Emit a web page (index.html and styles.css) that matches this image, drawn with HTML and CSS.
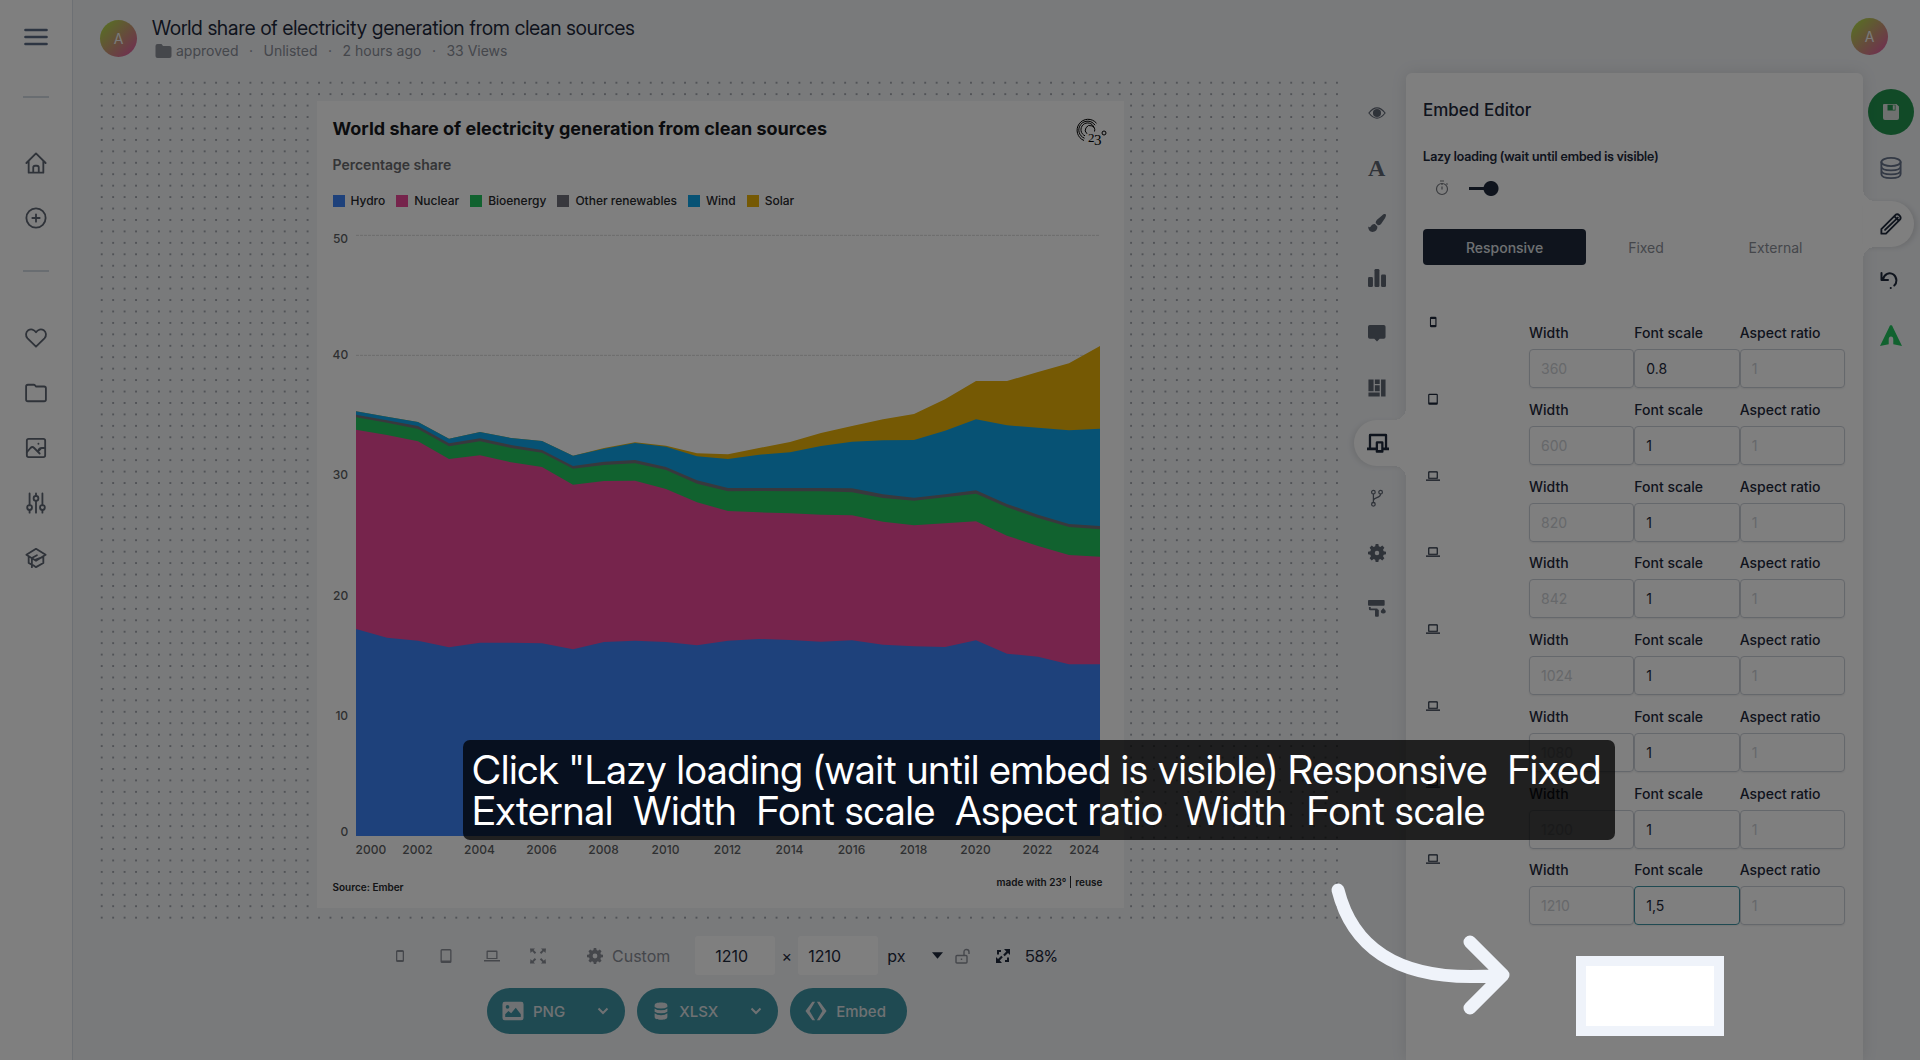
FILE: index.html
```html
<!DOCTYPE html>
<html lang="en">
<head>
<meta charset="utf-8">
<title>Embed Editor</title>
<meta name="viewport" content="width=device-width, initial-scale=1">
<link rel="stylesheet" href="styles.css">
</head>
<body>
<div class="app">
  <nav class="sidebar" aria-label="Main">
    <button class="nav-btn menu-btn" aria-label="Menu"><svg viewBox="0 0 24 24" class="i28 line bold"><path d="M3 6h18M3 12h18M3 18h18"/></svg></button>
    <hr class="nav-rule">
    <div class="nav-group">
      <a href="#" aria-label="Home"><svg viewBox="0 0 24 24" class="i24 line"><path d="M1.500 12 12 1.500 22.500 12M4 10v12.500h16V10M9 22.500V17q0-2 2-2h2q2 0 2 2v5.500"/></svg></a>
      <a href="#" aria-label="Create"><svg viewBox="0 0 24 24" class="i24 line"><circle cx="12" cy="12" r="10.500"/><path d="M12 8v8M8 12h8"/></svg></a>
    </div>
    <hr class="nav-rule">
    <div class="nav-group">
      <a href="#" aria-label="Favourites"><svg viewBox="0 0 24 24" class="i24 line"><path d="M12 21.500 2.800 12.300C.2 9.500.8 5.500 3.500 3.600 6.300 1.700 10 2.500 12 5.800c2-3.300 5.700-4.100 8.500-2.200 2.700 1.900 3.300 5.900.7 8.700z"/></svg></a>
      <a href="#" aria-label="Folders"><svg viewBox="0 0 24 24" class="i24 line"><path d="M1.200 19V5q0-2 2-2h6.300q1 0 1.600.8l.8 1.100h8.900q2 0 2 2V19q0 2-2 2H3.200q-2 0-2-2z"/></svg></a>
      <a href="#" aria-label="Images"><svg viewBox="0 0 24 24" class="i24 line"><rect x="2" y="2" width="20" height="20" rx="2"/><path d="m2 16.500 4-4.500q2-2 4 0l6 6M14.500 15.500q.5-3.500 4-3.500h3.500M14.500 15.500l2.500-2.500M14.600 7.400h.1"/></svg></a>
      <a href="#" aria-label="Settings"><svg viewBox="0 0 24 24" class="i24 line"><path d="M5 1.500v13M5 20v2.500M12 1.500V4M12 9.500v13M19 1.500v13M19 20v2.500"/><circle cx="5" cy="17" r="2.600"/><circle cx="12" cy="7" r="2.600"/><circle cx="19" cy="17" r="2.600"/></svg></a>
      <a href="#" aria-label="Academy"><svg viewBox="0 0 24 24" class="i24 line"><path d="M1.500 8.500 12 2l10.500 6.500L12 15zM4 10.500v7l3 1.500M20 10.500v7L12 22l-3-2M7.500 22V12L13 9M11 14l8-3"/></svg></a>
    </div>
  </nav>

  <div class="workspace">
    <header class="topbar">
      <span class="avatar">A</span>
      <div class="doc">
        <h1 class="doc-title">World share of electricity generation from clean sources</h1>
        <p class="doc-meta">
          <svg viewBox="0 0 16 14" class="folder"><path d="M0 2q0-2 2-2h4l1.500 2H14q2 0 2 2v8q0 2-2 2H2q-2 0-2-2z"/></svg>
          <span>approved</span><i>·</i><span>Unlisted</span><i>·</i><span>2 hours ago</span><i>·</i><span>33 Views</span>
        </p>
      </div>
      <span class="avatar avatar-end">A</span>
    </header>

    <div class="editor">
      <main class="stage">
        <div class="canvas">
          <article class="chart-card">
            <svg class="brand" viewBox="0 0 30 28"><g fill="none" stroke="#000"><path d="M19.500 4.200A11 11 0 1 0 7 21.500"/><path d="M18 6.200A8.800 8.800 0 1 0 7.500 19.200"/><path d="M17 8.500A6.700 6.700 0 1 0 8 16.800"/><path d="M17.500 12.500A4.700 4.700 0 1 0 10 14.800"/><circle cx="27" cy="14" r="2"/></g><text x="11" y="23" font-size="13">2</text><text x="17" y="26" font-size="15">3</text></svg>
            <h2 class="chart-title">World share of electricity generation from clean sources</h2>
            <p class="chart-sub">Percentage share</p>
            <ul class="legend">
              <li><span class="swatch hydro"></span>Hydro</li>
              <li><span class="swatch nuclear"></span>Nuclear</li>
              <li><span class="swatch bio"></span>Bioenergy</li>
              <li><span class="swatch other"></span>Other renewables</li>
              <li><span class="swatch wind"></span>Wind</li>
              <li><span class="swatch solar"></span>Solar</li>
            </ul>
            <div class="plot-area">
              <div class="y-axis"><span>50</span><span>40</span><span>30</span><span>20</span><span>10</span><span>0</span></div>
              <svg class="plot" viewBox="0 103 24 1803" preserveAspectRatio="none" role="img" aria-label="Stacked area chart, 2000 to 2024">
                <g class="gridlines"><path d="M0 104H24M0 464H24"/></g>
                <polygon class="solar" points="0,632 1,648 2,664 3,714 4,694 5,712 6,721 7,765 8,742 9,725 10,735 11,758 12,761 13,742 14,724 15,697 16,676 17,656 18,640 19,596 20,541 21,541 22,514 23,488 24,436 24,1906 0,1906"/>
                <polygon class="wind" points="0,632 1,648 2,664 3,714 4,694 5,712 6,721 7,765 8,744 9,727 10,738 11,767 12,775 13,762 14,755 15,736 16,723 17,719 18,718 19,690 20,656 21,674 22,681 23,689 24,684 24,1906 0,1906"/>
                <polygon class="other" points="0,642 1,659 2,676 3,728 4,713 5,733 6,748 7,796 8,783 9,778 10,799 11,839 12,862 13,862 14,862 15,862 16,863 17,881 18,891 19,881 20,869 21,910 22,942 23,970 24,976 24,1906 0,1906"/>
                <polygon class="bio" points="0,650 1,666 2,685 3,737 4,722 5,742 6,756 7,804 8,793 9,788 10,808 11,849 12,872 13,871 14,872 15,872 16,875 17,892 18,900 19,890 20,879 21,920 22,952 23,979 24,986 24,1906 0,1906"/>
                <polygon class="nuclear" points="0,687 1,703 2,722 3,775 4,764 5,785 6,799 7,852 8,841 9,840 10,865 11,905 12,931 13,935 14,938 15,942 16,944 17,963 18,974 19,968 20,962 21,1005 22,1036 23,1063 24,1068 24,1906 0,1906"/>
                <polygon class="hydro" points="0,1285 1,1311 2,1320 3,1340 4,1326 5,1326 6,1328 7,1346 8,1324 9,1320 10,1324 11,1334 12,1320 13,1315 14,1318 15,1323 16,1319 17,1332 18,1337 19,1339 20,1319 21,1359 22,1368 23,1391 24,1391 24,1906 0,1906"/>
              </svg>
              <div class="x-axis"><span>2000</span><span>2002</span><span>2004</span><span>2006</span><span>2008</span><span>2010</span><span>2012</span><span>2014</span><span>2016</span><span>2018</span><span>2020</span><span>2022</span><span>2024</span></div>
            </div>
            <footer class="chart-foot"><span>Source: Ember</span><span class="credit"><a href="#">made with 23°</a><a href="#" class="reuse">reuse</a></span></footer>
          </article>
        </div>

        <div class="sizebar">
          <div class="devices">
            <button aria-label="Phone"><svg viewBox="0 0 16 16" class="i16"><path fill-rule="evenodd" d="M5.500 2h5q1.500 0 1.500 1.500v9q0 1.500-1.500 1.500h-5Q4 14 4 12.500v-9Q4 2 5.500 2zM5.300 4v8h5.400V4z"/></svg></button>
            <button aria-label="Tablet"><svg viewBox="0 0 16 16" class="i16"><path fill-rule="evenodd" d="M4 1h8q1.500 0 1.500 1.500v11Q13.500 15 12 15H4q-1.500 0-1.500-1.500v-11Q2.500 1 4 1zM3.800 2.500v10h8.400v-10z"/></svg></button>
            <button aria-label="Laptop"><svg viewBox="0 0 16 16" class="i16"><path fill-rule="evenodd" d="M3.500 2.500h9q1 0 1 1V11h-11V3.500q0-1 1-1zM3.800 4v6h8.400V4zM0 12h16v1.500H0z"/></svg></button>
            <button aria-label="Full screen"><svg viewBox="0 0 16 16" class="i16"><path d="M0 .5h5L3.600 1.900l2.600 2.700-1.400 1.300-2.600-2.600L.5 5zM16 .5h-5l1.400 1.400-2.600 2.700 1.400 1.300 2.600-2.600L15.500 5zM0 15.500h5l-1.400-1.400 2.600-2.700-1.400-1.300-2.600 2.600L.5 11zM16 15.500h-5l1.400-1.400-2.600-2.700 1.400-1.300 2.600 2.600L15.500 11z"/></svg></button>
          </div>
          <button class="custom"><svg viewBox="0 0 20 20" class="i16"><path fill-rule="evenodd" d="M8.500 0h3l.5 2.600 1.700.7L15.900 1.800l2.300 2.300-1.500 2.200.7 1.700 2.600.5v3l-2.600.5-.7 1.700 1.500 2.200-2.300 2.300-2.200-1.500-1.700.7-.5 2.600h-3L8 17.400l-1.700-.7-2.200 1.500-2.300-2.300 1.500-2.200L2.600 12 0 11.500v-3L2.600 8l.7-1.700-1.500-2.200 2.300-2.300 2.200 1.500L8 2.600zM10 7a3 3 0 1 0 0 6 3 3 0 0 0 0-6z"/></svg>Custom</button>
          <input class="dim dim-w" aria-label="Width in pixels" value="1210"><span class="times">×</span><input class="dim" aria-label="Height in pixels" value="1210">
          <button class="unit">px<svg viewBox="0 0 12 7" class="caret"><path d="M0 0h12L6 7z"/></svg></button>
          <button class="lock" aria-label="Unlock ratio"><svg viewBox="0 0 16 16" class="i16 thin"><path d="M2 7.500h9q1 0 1 1V14q0 1-1 1H2q-1 0-1-1V8.500q0-1 1-1zM9 7.500V4q0-2.500 2.500-2.500T14 4v2M6.500 10.500V12"/></svg></button>
          <button class="zoom"><svg viewBox="0 0 16 16" class="i16"><path d="M9 1h6v6l-2-2-3.300 3.300-1.500-1.500L11.300 3.500zM7 15H1V9l2 2 3.300-3.300 1.500 1.500L4.700 12.500zM2 2h4v2H4v2.500H2zM14 14h-4v-2h2V9.500h2z"/></svg>58%</button>
        </div>

        <div class="actions">
          <button class="pill"><svg viewBox="0 0 24 24" class="i24"><path fill-rule="evenodd" d="M3 2h18q2.500 0 2.500 2.500v15Q23.500 22 21 22H3Q.5 22 .5 19.500v-15Q.5 2 3 2zM6 5.500a2 2 0 1 0 0 4 2 2 0 0 0 0-4zM3.500 18.500h17v-3L15 8.500l-5 6-3-2.500-3.500 3.500z"/></svg>PNG<svg viewBox="0 0 12 8" class="chev"><path d="m1.500 1.500 4.500 4.500 4.500-4.500"/></svg></button>
          <button class="pill"><svg viewBox="0 0 24 24" class="i24 db"><path d="M3.500 4.500C3.500 1.500 7 .5 12 .5s8.500 1 8.500 4v2q-3 2-8.500 2t-8.500-2zM3.500 8.500q3 2.500 8.500 2.500t8.500-2.500V13q-3 2-8.500 2t-8.500-2zM3.500 15q3 2.500 8.500 2.500t8.500-2.500v4.500c0 3-3.500 4-8.500 4s-8.500-1-8.500-4z"/></svg>XLSX<svg viewBox="0 0 12 8" class="chev"><path d="m1.500 1.500 4.500 4.500 4.500-4.500"/></svg></button>
          <button class="pill pill-plain"><svg viewBox="0 0 24 24" class="i24"><path d="M8 2h3L5 12l6 10H8L.5 12zM16 2h-3l6 10-6 10h3l7.500-10z"/></svg>Embed</button>
        </div>
      </main>

      <div class="tools" role="toolbar" aria-label="Editor sections">
        <button aria-label="Preview"><svg viewBox="0 0 20 20" class="i20"><path fill="none" stroke="currentColor" stroke-width="1.300" d="M1 10q9-11.500 18 0-9 11.500-18 0z"/><path d="M10 5.500a4.500 4.500 0 1 0 4.500 4.500A4.500 4.500 0 0 0 10 5.500z"/></svg></button>
        <button aria-label="Text" class="glyph">A</button>
        <button aria-label="Style"><svg viewBox="0 0 20 20" class="i20"><path d="M19.600.4c.8.800.300 2.400-.6 4L14.500 11q-1.500 1.800-3.500 1.500L8.500 10q0-2 1.500-3.500L15.600 1.600c1.600-1.200 3.200-1.900 4-1.200zM7.600 11.200l2.800 2.800c.3 3.500-2.200 6-5.400 6C2 20 .2 18 .2 14c1 .800 1.900 1 2.600.2 1-1.800 2.600-3.200 4.800-3z"/></svg></button>
        <button aria-label="Chart"><svg viewBox="0 0 20 20" class="i20"><rect x="0" y="9" width="5.500" height="11" rx="1.500"/><rect x="7.200" y="0" width="5.500" height="20" rx="1.500"/><rect x="14.500" y="6" width="5.500" height="14" rx="1.500"/></svg></button>
        <button aria-label="Annotations"><svg viewBox="0 0 20 20" class="i20"><path d="M2 1h15.500q2 0 2 2v11.500q0 2-2 2H13l-3 3-3-3H2q-2 0-2-2V3q0-2 2-2z"/></svg></button>
        <button aria-label="Layout"><svg viewBox="0 0 20 20" class="i20"><path d="M.5.500h5.700v13.200H.5zM7.600.500H13v5H7.600zM7.600 7H13v6.700H7.600zM14.500.500h5v19h-5zM.5 15H13v4.500H.5z"/></svg></button>
        <button aria-label="Embed" class="active" aria-pressed="true"><svg viewBox="0 0 24 24" class="i24"><path fill-rule="evenodd" d="M3.500 2h17Q22 2 22 3.500V17h2v3h-6v1.500q0 1-1 1h-6.500q-1 0-1-1V20H0v-3h2V3.500Q2 2 3.500 2zM4.500 4.500V17h5v-5.500Q9.500 10 11 10h5.500q1.500 0 1.500 1.500V17h1.500V4.500zM12 12.500v7h3.500v-7z"/></svg></button>
        <button aria-label="Branches"><svg viewBox="0 0 20 20" class="i20 thin"><circle cx="6" cy="3.500" r="2"/><circle cx="6" cy="17" r="2"/><circle cx="14" cy="3.500" r="2"/><path d="M6 5.500V15M14 5.500c0 5-7 3-8 7"/></svg></button>
        <button aria-label="Settings"><svg viewBox="0 0 20 20" class="i20"><path fill-rule="evenodd" d="M8.500 0h3l.5 2.600 1.700.7L15.900 1.800l2.300 2.300-1.500 2.200.7 1.700 2.600.5v3l-2.600.5-.7 1.700 1.500 2.200-2.300 2.300-2.200-1.500-1.700.7-.5 2.600h-3L8 17.400l-1.700-.7-2.200 1.500-2.300-2.300 1.500-2.200L2.600 12 0 11.500v-3L2.600 8l.7-1.700-1.500-2.200 2.300-2.300 2.200 1.500L8 2.600zM10 7.500a2.500 2.500 0 1 0 0 5 2.500 2.500 0 0 0 0-5z"/></svg></button>
        <button aria-label="Theme"><svg viewBox="0 0 20 20" class="i20"><path d="M1 1h16.500q1 0 1 1v4.500q0 1-1 1H1q-1 0-1-1V2q0-1 1-1zM1 9h2v1.500h6.500q1.500 0 1.500 1.500h1v7q0 .8-1 .8H8.800q-1 0-1-.8v-6.500H2.500Q1 12.500 1 11zM17 10l2.600 3q.8 2.800-2.600 3.200-3.400-.400-2.600-3.200z"/></svg></button>
      </div>

      <aside class="panel">
        <h2 class="panel-title">Embed Editor</h2>
        <label class="lazy-label" for="lazy">Lazy loading (wait until embed is visible)</label>
        <div class="lazy">
          <svg viewBox="0 0 14 16" class="timer"><path d="M5 1h4M7 3v2M11.500 3.500l1 1M7 6.500v3"/><circle cx="7" cy="9" r="5.500"/></svg>
          <input type="checkbox" id="lazy" class="toggle" checked>
        </div>
        <div class="tabs" role="tablist">
          <button role="tab" aria-selected="true" class="tab on">Responsive</button>
          <button role="tab" aria-selected="false" class="tab">Fixed</button>
          <button role="tab" aria-selected="false" class="tab">External</button>
        </div>
        <div class="breakpoints">
          <div class="bp"><svg viewBox="0 0 16 16" class="i14"><path fill-rule="evenodd" d="M6 2h4.500Q12 2 12 3.500v9q0 1.500-1.500 1.500H6q-1.500 0-1.500-1.500v-9Q4.500 2 6 2zM5.700 4.500v7h5v-7z"/></svg><label>Width<input placeholder="360"></label><label>Font scale<input value="0.8"></label><label>Aspect ratio<input placeholder="1"></label></div>
          <div class="bp"><svg viewBox="0 0 16 16" class="i14"><path fill-rule="evenodd" d="M4 2h8q1.500 0 1.500 1.500v9.500q0 1.500-1.500 1.500H4q-1.500 0-1.500-1.500V3.500Q2.500 2 4 2zM3.800 3.300V12h8.400V3.300z"/></svg><label>Width<input placeholder="600"></label><label>Font scale<input value="1"></label><label>Aspect ratio<input placeholder="1"></label></div>
          <div class="bp"><svg viewBox="0 0 16 16" class="i14"><path fill-rule="evenodd" d="M3.500 2.500h9q1 0 1 1V11h-11V3.500q0-1 1-1zM3.800 4v6h8.400V4zM0 12h16v1.500H0z"/></svg><label>Width<input placeholder="820"></label><label>Font scale<input value="1"></label><label>Aspect ratio<input placeholder="1"></label></div>
          <div class="bp"><svg viewBox="0 0 16 16" class="i14"><path fill-rule="evenodd" d="M3.500 2.500h9q1 0 1 1V11h-11V3.500q0-1 1-1zM3.800 4v6h8.400V4zM0 12h16v1.500H0z"/></svg><label>Width<input placeholder="842"></label><label>Font scale<input value="1"></label><label>Aspect ratio<input placeholder="1"></label></div>
          <div class="bp"><svg viewBox="0 0 16 16" class="i14"><path fill-rule="evenodd" d="M3.500 2.500h9q1 0 1 1V11h-11V3.500q0-1 1-1zM3.800 4v6h8.400V4zM0 12h16v1.500H0z"/></svg><label>Width<input placeholder="1024"></label><label>Font scale<input value="1"></label><label>Aspect ratio<input placeholder="1"></label></div>
          <div class="bp"><svg viewBox="0 0 16 16" class="i14"><path fill-rule="evenodd" d="M3.500 2.500h9q1 0 1 1V11h-11V3.500q0-1 1-1zM3.800 4v6h8.400V4zM0 12h16v1.500H0z"/></svg><label>Width<input placeholder="1080"></label><label>Font scale<input value="1"></label><label>Aspect ratio<input placeholder="1"></label></div>
          <div class="bp"><svg viewBox="0 0 16 16" class="i14"><path fill-rule="evenodd" d="M3.500 2.500h9q1 0 1 1V11h-11V3.500q0-1 1-1zM3.800 4v6h8.400V4zM0 12h16v1.500H0z"/></svg><label>Width<input placeholder="1200"></label><label>Font scale<input value="1"></label><label>Aspect ratio<input placeholder="1"></label></div>
          <div class="bp"><svg viewBox="0 0 16 16" class="i14"><path fill-rule="evenodd" d="M3.500 2.500h9q1 0 1 1V11h-11V3.500q0-1 1-1zM3.800 4v6h8.400V4zM0 12h16v1.500H0z"/></svg><label>Width<input placeholder="1210"></label><label>Font scale<input class="current" value="1,5"></label><label>Aspect ratio<input placeholder="1"></label></div>
        </div>
      </aside>

      <div class="rail" role="toolbar" aria-label="Document">
        <button aria-label="Save" class="save"><svg viewBox="0 0 18 18" class="i18"><path fill-rule="evenodd" d="M2 1h12.500L17 3.500V15q0 2-2 2H3q-2 0-2-2V2q0-1 1-1zM5.500 1.800v5.700h8V1.800zM10.800 2.300h2v4.500h-2z"/></svg></button>
        <button aria-label="Data"><svg viewBox="0 0 24 24" class="i24 line data"><ellipse cx="12" cy="5.500" rx="10.500" ry="4.500"/><path d="M1.500 5.500v13c0 6 21 6 21 0v-13M1.500 10c0 6 21 6 21 0M1.500 14.500c0 6 21 6 21 0"/></svg></button>
        <button aria-label="Edit" class="active" aria-pressed="true"><svg viewBox="0 0 24 24" class="i24 line dark"><path d="M1.500 22.500v-5L17 2q2-1.500 4.200.6T22 7L6.500 22.500zM15.500 3.500l5 5M19.500 5 5.500 18.500"/></svg></button>
        <button aria-label="Undo"><svg viewBox="0 0 18 18" class="i18 line dark"><path d="M1.500 2v7H8M3 8.500c1-5.500 6.500-8 10.500-5 4 3.200 3.500 8.500.8 11M10.700 17h.1"/></svg></button>
        <button aria-label="Assistant"><svg viewBox="0 0 24 24" class="i24 green"><path d="M12 0q1.500 0 2.300 3L24 23l-9.500-2v-5q0-3.500-2.500-3.500T9.500 16v5L0 23 9.700 3Q10.500 0 12 0z"/></svg></button>
      </div>
    </div>
  </div>
</div>

<div class="tour">
  <p class="caption">Click "Lazy loading (wait until embed is visible) Responsive  Fixed
External  Width  Font scale  Aspect ratio  Width  Font scale</p>
  <svg class="arrow" viewBox="0 0 190 150"><path d="M18 19C30 67 68 115 182 104M150 71l33 33-33 33"/></svg>
  <div class="spot"></div>
</div>
</body>
</html>
```
FILE: styles.css
```css
:root {
  --ink: #1e293b;
  --muted: #8a8e97;
  --slate: #5f6673;
  --page: #f2f4f7;
  --teal: #3e94a4;
  --note: #eff3fa;
  --display: "Inter Display", Inter, sans-serif;
}
* { box-sizing: border-box; }
body {
  margin: 0;
  font-family: Inter, "Open Sans", sans-serif;
  color: var(--ink);
  background: var(--page);
}
h1, h2, p, ul { margin: 0; padding: 0; }
button, input { font: inherit; color: inherit; }
button { border: 0; background: none; padding: 0; }
a { color: inherit; text-decoration: none; }
svg { display: block; fill: currentColor; flex: none; overflow: visible; }

.i14 { width: 14px; height: 14px; }
.i16 { width: 16px; height: 16px; }
.i18 { width: 18px; height: 18px; }
.i20 { width: 18px; height: 18px; }
.i24 { width: 22px; height: 22px; }
.i28 { width: 28px; height: 28px; }
.line { fill: none; stroke: currentColor; stroke-width: 2; stroke-linecap: round; stroke-linejoin: round; }
.bold { stroke-width: 2.3; }
.thin { fill: none; stroke: currentColor; stroke-width: 1.4; }

.app { display: flex; min-height: 100vh; }

/* Left navigation */
.sidebar {
  width: 73px;
  padding-top: 23px;
  background: #fff;
  border-right: 1px solid #dbe1e8;
  display: flex;
  flex-direction: column;
  align-items: center;
  color: var(--slate);
}
.nav-rule { width: 26px; height: 2px; margin: 45px 0 54px; border: 0; background: #d3dae3; }
.nav-group { display: grid; gap: 33px; }
.nav-group + .nav-rule { margin: 41px 0 55px; }
.menu-btn { color: #5b6b84; }

/* Header */
.workspace { flex: 1; min-width: 0; display: flex; flex-direction: column; }
.topbar { height: 73px; padding: 15px 32px 0 27px; display: flex; align-items: flex-start; gap: 15px; }
.avatar {
  width: 37px;
  height: 37px;
  margin-top: 5px;
  border-radius: 50%;
  background: linear-gradient(135deg, #b5d34f 15%, #e0609f 90%);
  color: #f4f4f4;
  font-size: 14px;
  line-height: 37px;
  text-align: center;
}
.avatar-end { margin: 3px 0 0 auto; }
.doc-title { font-family: var(--display); font-size: 20px; line-height: 26px; font-weight: 400; }
.doc-meta { display: flex; align-items: center; font-size: 14px; line-height: 20px; color: var(--muted); }
.doc-meta i { width: 25px; text-align: center; font-style: normal; }
.folder { width: 17px; height: 14px; margin: 0 4px 0 3px; }

.editor { flex: 1; display: flex; }

/* Chart stage */
.stage { flex: 1; min-width: 0; padding: 4px 4px 0 23px; }
.canvas {
  padding: 24px 0 16px;
  background-image: radial-gradient(circle at center, #a3a7ae 0 1px, transparent 1px);
  background-size: calc(100% / 109) calc(100% / 74);
}
.chart-card {
  max-width: 807px;
  margin: 0 auto;
  padding: 14px 21px 11px 16px;
  background: #fff;
  display: grid;
  grid-template-columns: 1fr auto;
}
.brand { grid-area: 1 / 2 / 3 / 3; width: 30px; height: 28px; margin: 4px -4px 0 0; font-family: "Liberation Serif", serif; fill: #000; }
.chart-title { grid-area: 1 / 1; font-size: 18px; line-height: 28px; font-weight: 700; color: #16181d; }
.chart-sub { grid-area: 2 / 1; font-size: 14px; line-height: 20px; margin-top: 12px; font-weight: 600; color: #6a6b6e; }
.legend { grid-column: 1 / 3; list-style: none; display: flex; gap: 11px; margin-top: 18px; font-size: 12px; line-height: 16px; font-weight: 500; color: #26282c; }
.legend li { display: flex; align-items: center; gap: 6px; }
.swatch { width: 12px; height: 12px; }
.hydro { fill: #3c82f6; background: #3c82f6; }
.nuclear { fill: #ec4899; background: #ec4899; }
.bio { fill: #22c55e; background: #22c55e; }
.other { fill: #71717a; background: #71717a; }
.wind { fill: #0ea5e9; background: #0ea5e9; }
.solar { fill: #eab308; background: #eab308; }
.plot-area { grid-column: 1 / 3; display: grid; grid-template-columns: 15px 1fr; column-gap: 8px; margin: 26px 3px 0 0; font-size: 12px; color: #5d5f63; font-weight: 500; }
.y-axis { display: grid; grid-template-rows: 1fr 2fr 2fr 2fr 2fr 1fr; align-items: center; text-align: right; line-height: 8px; }
.y-axis span:first-child { align-self: start; }
.y-axis span:last-child { align-self: end; }
.plot { width: 100%; height: 601px; }
.gridlines { fill: none; stroke: #d9d9d9; stroke-width: 1; }
.gridlines path { vector-effect: non-scaling-stroke; stroke-dasharray: 3 1; }
.x-axis { grid-column: 2; display: grid; grid-template-columns: 1fr repeat(11, 2fr) 1fr; text-align: center; line-height: 16px; margin-top: 6px; }
.x-axis span { min-width: 0; }
.x-axis span:first-child { text-align: left; }
.x-axis span:last-child { justify-self: end; }
.chart-foot { grid-column: 1 / 3; display: flex; justify-content: space-between; margin-top: 13px; font-size: 10px; line-height: 20px; font-weight: 600; color: #26282c; padding-top: 6px; }
.credit { margin-top: -5px; }
.reuse { margin-left: 4px; padding-left: 4px; border-left: 1px solid #26282c; }

/* Size controls */
.sizebar { display: flex; align-items: center; margin: 12px 0 0 296px; height: 39px; color: var(--muted); font-size: 16px; }
.devices { display: flex; gap: 30px; }
.custom { display: flex; align-items: center; gap: 9px; margin: 0 25px 0 41px; }
.dim { width: 80px; height: 39px; padding: 0 10px; border: 0; background: #fff; border-radius: 3px; color: var(--ink); }
.dim-w { padding-left: 20px; }
.times { width: 23px; text-align: center; color: var(--ink); }
.unit { display: flex; align-items: center; gap: 27px; margin-left: 9px; color: var(--ink); }
.caret { width: 11px; height: 7px; }
.lock { margin: 0 24px 0 12px; }
.zoom { display: flex; align-items: center; gap: 14px; color: var(--ink); font-family: var(--display); }
.actions { display: flex; gap: 12px; margin: 13px 0 27px 391px; }
.pill { height: 46px; padding: 0 16px 0 15px; border-radius: 23px; background: var(--teal); color: #dfe3e6; display: flex; align-items: center; gap: 9px; font-size: 15px; font-weight: 500; }
.pill-plain { padding-right: 21px; }
.pill .db { width: 18px; }
.chev { width: 12px; height: 8px; margin-left: 23px; fill: none; stroke: currentColor; stroke-width: 2; }

/* Section tools beside the panel */
.tools { width: 58px; padding-top: 17px; display: flex; flex-direction: column; align-items: flex-end; gap: 9px; color: var(--slate); }
.tools button { width: 52px; height: 46px; display: flex; align-items: center; padding-left: 14px; }
.tools .glyph { font-family: "Liberation Serif", serif; font-size: 24px; font-weight: 700; }
.tools .active, .rail .active { position: relative; z-index: 2; background: #fff; color: var(--ink); }
.tools .active { padding-left: 13px; border-radius: 23px 0 0 23px; box-shadow: -3px 1px 5px rgba(0, 0, 0, .08); }
.active::before, .active::after { content: ""; position: absolute; width: 12px; height: 12px; }
.active::before { top: -12px; }
.active::after { bottom: -12px; }
.tools .active::before, .tools .active::after { right: 0; }
.tools .active::before { background: radial-gradient(circle at 0 0, transparent 12px, #fff 12px); }
.tools .active::after { background: radial-gradient(circle at 0 100%, transparent 12px, #fff 12px); }

/* Panel */
.panel { width: 457px; position: relative; z-index: 1; padding: 24px 18px 0 17px; background: #fff; border-radius: 6px 6px 0 0; box-shadow: 0 0 16px rgba(0, 0, 0, .1); }
.panel-title { font-size: 17px; line-height: 26px; font-weight: 500; }
.lazy-label { display: block; margin-top: 23px; font-family: var(--display); font-size: 13px; line-height: 20px; font-weight: 600; }
.lazy { display: flex; align-items: center; gap: 20px; height: 30px; padding-left: 12px; margin-top: 7px; }
.timer { width: 14px; height: 16px; fill: none; stroke: #777a80; stroke-width: 1.2; }
.toggle { appearance: none; width: 30px; height: 15px; margin: 0; background: radial-gradient(circle at 22px 50%, var(--ink) 7px, transparent 8px), linear-gradient(var(--ink), var(--ink)) 0 6px / 20px 3px no-repeat; }
.tabs { display: grid; grid-template-columns: 163fr 120fr 139fr; margin-top: 26px; font-size: 14px; }
.tab { height: 36px; border-radius: 4px; color: var(--muted); }
.tab.on { background: var(--ink); color: #dfe1e5; font-weight: 500; }
.breakpoints { display: grid; grid-auto-rows: 1fr; height: 614px; margin-top: 47px; }
.bp { display: grid; grid-template-columns: 106px 1fr 1fr 1fr; }
.bp svg { margin: 3px 0 0 3px; }
.bp label { font-size: 14px; line-height: 20px; font-weight: 500; padding-top: 11px; }
.bp input { display: block; width: 100%; height: 39px; margin-top: 6px; padding: 0 11px; border: 1px solid #cbd0d8; border-radius: 4px; background: none; font-size: 14px; font-weight: 400; box-shadow: 0 1px 2px rgba(0, 0, 0, .08); }
.bp input::placeholder { color: #cdd0d5; opacity: 1; }
.bp .current { border-color: var(--teal); }

/* Document rail */
.rail { width: 57px; padding-top: 16px; display: flex; flex-direction: column; gap: 10px; color: var(--ink); }
.rail button { width: 51px; height: 46px; display: flex; align-items: center; padding-left: 17px; }
.rail .save { width: 46px; margin-left: 5px; padding-left: 14px; border-radius: 50%; background: #22954f; color: #dfe3e0; }
.rail .active { border-radius: 0 23px 23px 0; box-shadow: 3px 1px 5px rgba(0, 0, 0, .1); }
.rail .active::before, .rail .active::after { left: 0; }
.rail .active::before { background: radial-gradient(circle at 100% 0, transparent 12px, #fff 12px); }
.rail .active::after { background: radial-gradient(circle at 100% 100%, transparent 12px, #fff 12px); }
.data { color: #66738a; }
.green { color: #22c55e; }

/* Guided tour layer */
.tour { position: absolute; inset: 0; z-index: 10; background: rgba(0, 0, 0, .5); overflow: hidden; }
.caption {
  position: absolute;
  right: 305px;
  bottom: 220px;
  padding: 9px;
  width: 1152px;
  border-radius: 7px;
  background: rgba(0, 0, 0, .75);
  color: #fff;
  font-family: var(--display);
  font-size: 40px;
  line-height: 41px;
  white-space: pre;
}
.arrow { position: absolute; right: 410px; bottom: 39px; width: 190px; height: 150px; fill: none; stroke: var(--note); stroke-width: 13; stroke-linecap: round; stroke-linejoin: round; }
.spot { position: absolute; right: 196px; bottom: 24px; width: 148px; height: 80px; border: 10px solid var(--note); background: #fff; }
```
